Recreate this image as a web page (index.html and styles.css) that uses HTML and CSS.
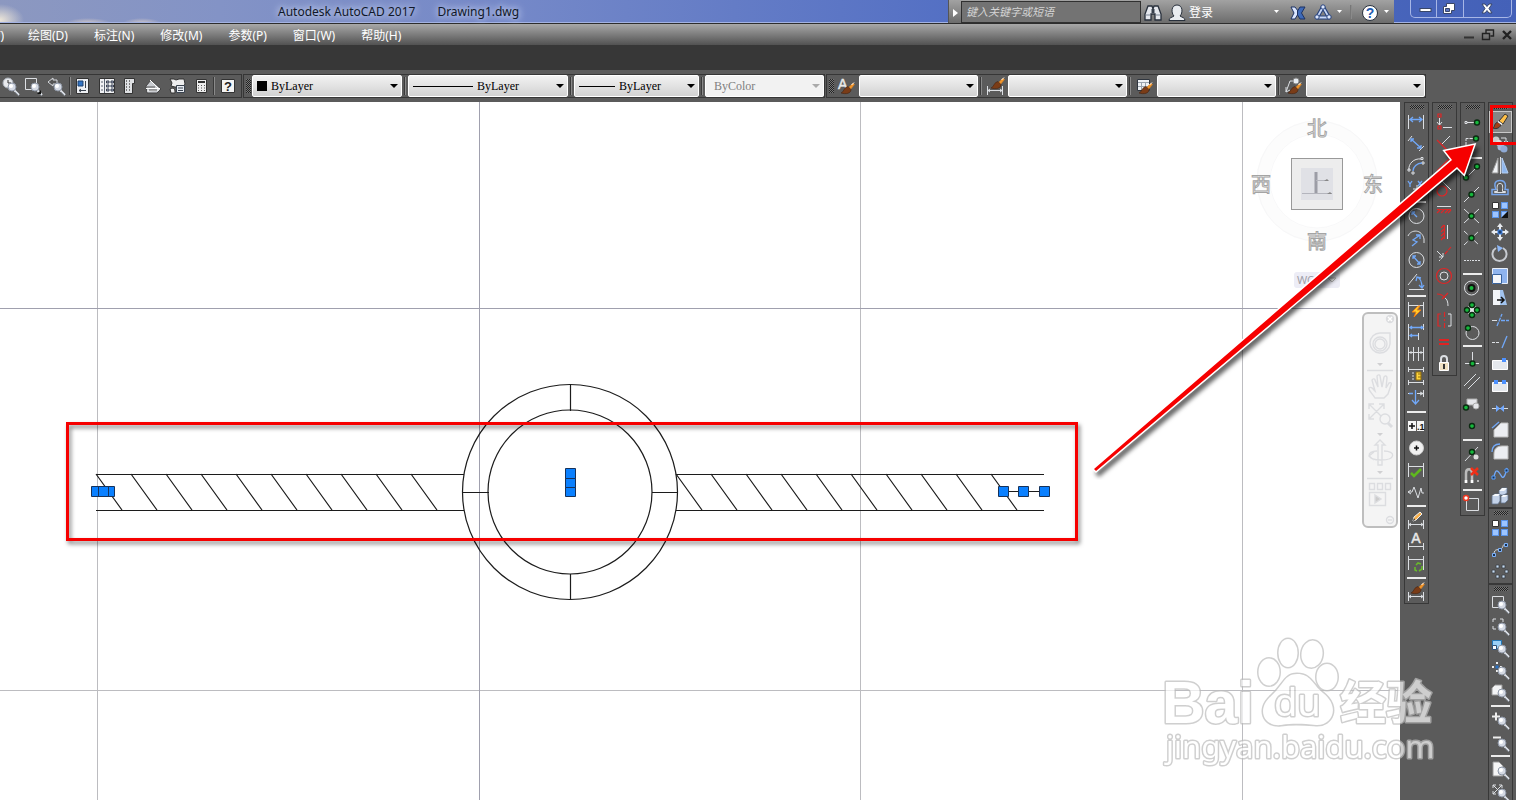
FILE: index.html
```html
<!DOCTYPE html>
<html lang="zh-CN">
<head>
<meta charset="utf-8">
<title>Autodesk AutoCAD 2017</title>
<link rel="stylesheet" href="styles.css">
</head>
<body>
<svg class="defs" width="0" height="0" aria-hidden="true">
  <defs>
    <g id="lens"><path d="M14 14l5 5" stroke="#dfe3ea" stroke-width="2"/><path d="M15 16l4 4" stroke="#8b929c"/><circle cx="12" cy="11" r="4" fill="#d5dae4" stroke="#8d96a5"/><circle cx="11" cy="10" r="2" fill="#fff"/></g>
    <g id="dot"><circle r="2.5" fill="#16b83c" stroke="#0c2a12" stroke-width="1.4"/></g>
    <g id="brush"><path d="M9 7l5-5 1.500 1.500-4 5z" fill="#f0942a" stroke="#c97a22" stroke-width=".5"/><path d="M12.500 4l2.500-2.500" stroke="#fff"/><path d="M9 5.500l3 3c0 4-5 5-10 3.500 3-1 3-6 7-6.500z" fill="#7a3c17" stroke="#45220f" stroke-width=".6"/></g>
    <g id="dimlow"><path d="M3.500 11v9M18.500 11v9M4 15.500h14M6 14l-2 1.500 2 1.500M16 14l2 1.500-2 1.500" class="w"/></g>
    <g id="sq"><rect width="6" height="6" fill="#9cc4ff" stroke="#5a94ea"/></g>
  </defs>
</svg>
<div class="app">
  <header class="titlebar">
    <h1 class="title"><span>Autodesk AutoCAD 2017</span><span>Drawing1.dwg</span></h1>
    <div class="infocenter">
      <button class="expand" aria-label="展开"><svg width="12" height="22"><path d="M4 8l5 4-5 4z" fill="#fff"/></svg></button>
      <input class="search" type="text" aria-label="搜索" placeholder="键入关键字或短语">
      <button aria-label="查找"><svg width="24" height="22"><path d="M7 5h4l1 3 1-3h4l3 8v6h-6v-6h-4v6H4v-6z" fill="#e4e7ed" stroke="#28303c" stroke-width="1.300"/><path d="M10.500 8h3v4h-3z" fill="#38404c"/><path d="M5 14h4M15 14h4" stroke="#7d8796"/></svg></button>
      <button class="signin"><svg width="22" height="22"><path d="M4 19.500c0-3 3-3 5-4.500-3-3-3-11 3-11s6 8 3 11c2 1.500 5 1.500 5 4.500z" fill="#e9ecf0" stroke="#28303c"/></svg><span>登录</span><i class="caret push"></i></button>
      <button aria-label="Exchange"><svg width="18" height="22"><path d="M2 6h4l3 4v3l-3 5H2l3-6z" fill="#dbe6ff" stroke="#1d3264"/><path d="M16 6h-5l-2.500 4v4l2.500 4h5l-3.500-6z" fill="#3e6ab8" stroke="#1d3264"/></svg></button>
      <button class="a360" aria-label="A360"><svg width="20" height="22"><path d="M10 6L4 16.500h12z" fill="none" stroke="#27427c" stroke-width="4" stroke-linejoin="round"/><path d="M10 6L4 16.500h12z" fill="none" stroke="#c8d8f7" stroke-width="1.800"/><g fill="#dce6fb" stroke="#27427c"><circle cx="10" cy="6" r="2.200"/><circle cx="4" cy="16" r="2.200"/><circle cx="16" cy="16" r="2.200"/></g></svg><i class="caret"></i></button>
      <span class="rule faint"></span>
      <button class="help" aria-label="帮助"><svg width="20" height="22"><circle cx="10" cy="12" r="7.500" fill="#fff" stroke="#28303c"/><text x="10" y="17" text-anchor="middle" class="qmark">?</text></svg><i class="caret"></i></button>
    </div>
    <div class="winctl">
      <button aria-label="最小化"><svg width="27" height="17"><rect x="9" y="8.500" width="11" height="3" fill="#fff" stroke="#394668"/></svg></button>
      <button aria-label="还原"><svg width="27" height="17"><path d="M9.500 3.500h8v7h-3v3h-8v-7h3z" fill="#fff" stroke="#394668"/><path d="M8.500 8.500h4v3h-4z" fill="#5d76bf" stroke="#394668"/></svg></button>
      <button class="wide" aria-label="关闭"><svg width="46" height="17"><path d="M18 4h3l2 2.500L25 4h3l-3 4.500 3 4.500h-3l-2-2.500-2 2.500h-3l3-4.500z" fill="#fff" stroke="#394668"/></svg></button>
    </div>
  </header>

  <nav class="menubar">
    <button class="clipped">工具(T)</button>
    <button>绘图(D)</button>
    <button>标注(N)</button>
    <button>修改(M)</button>
    <button>参数(P)</button>
    <button>窗口(W)</button>
    <button>帮助(H)</button>
    <div class="docctl">
      <button aria-label="最小化文档"><svg width="16" height="16"><path d="M3 10.500h10" stroke="#333" stroke-width="2"/></svg></button>
      <button aria-label="还原文档"><svg width="18" height="16"><path d="M7 6V3h7.500v6h-3M3.500 6.500h7v6h-7z" fill="none" stroke="#222" stroke-width="1.400"/></svg></button>
      <button aria-label="关闭文档"><svg width="16" height="16"><path d="M4 4l8 8M12 4l-8 8" stroke="#222" stroke-width="2.400"/></svg></button>
    </div>
  </nav>
  <div class="ribbon"></div>

  <div class="toolbars">
    <div class="bar bar-std">
      <button aria-label="实时缩放"><svg width="21" height="22"><circle cx="8" cy="8" r="5" fill="#e8eaee" stroke="#a9afb8"/><path d="M8 5v3h3" stroke="#333" fill="none"/><use href="#lens" x="0" y="1"/></svg></button>
      <button aria-label="窗口缩放"><svg width="23" height="22"><path d="M3.500 3.500h11v11h-11z" class="w"/><use href="#lens" x="1" y="1"/><path d="M19 15v4h-4z" fill="#111"/></svg></button>
      <button aria-label="缩放上一个"><svg width="23" height="22"><path d="M3 7l5-4v2h4v4H8v2z" fill="#555" stroke="#d8dbe0"/><use href="#lens" x="1" y="1"/></svg></button>
      <span class="rule"></span>
      <button aria-label="特性"><svg width="23" height="22"><path d="M5.500 3.500h12v15h-12z" fill="#eef0f4" stroke="#333"/><path d="M7 6h5v5H7z" fill="#3274c4" stroke="#1c406e"/><path d="M14.500 6v7M8 15.500h7M10 14l-2 1.500 2 1.500" stroke="#39424e" fill="none"/></svg></button>
      <button aria-label="设计中心"><svg width="24" height="22"><path d="M4.500 3.500h15v15h-15z" fill="#f0f1f4" stroke="#333"/><path d="M9.500 4v14M6 7h2M6 11h2M6 15h2" stroke="#5a6370"/><path d="M11.500 6h2.500v2h-2.500zM16 6h2.500v2H16zM11.500 10h2.500v2h-2.500zM16 10h2.500v2H16zM11.500 14h2.500v2h-2.500zM16 14h2.500v2H16z" fill="#aac" stroke="#39424e"/></svg></button>
      <button aria-label="工具选项板"><svg width="22" height="22"><path d="M5.500 3.500h10v5h-2v10h-8z" fill="#dfe1e4" stroke="#333"/><path d="M7 6h1M10 6h1M7 9h1M10 9h1M7 12h1M10 12h1M7 15h1M10 15h1" stroke="#777" stroke-width="2"/></svg></button>
      <button aria-label="图纸集"><svg width="24" height="22"><path d="M4 11l5-6 10 9-4 4H5z" fill="#c9ccd1" stroke="#444"/><path d="M8 5l8 8M4 13.500h14M5 16l12-1" stroke="#fff"/><path d="M5 12l8 0M7 15h8" stroke="#555"/></svg></button>
      <button aria-label="标记集"><svg width="24" height="22"><path d="M4 4h4l2 1 3-1h5l1 5-2 3H9l-4-1 1-3z" fill="#eee" stroke="#333"/><path d="M4 14c4-2 5 0 5 4H5z" fill="#eee" stroke="#333"/><path d="M10.500 10.500h8v7h-8z" fill="#e8ecf2" stroke="#39424e"/><path d="M12 13h5M12 15.500h5" stroke="#39424e"/></svg></button>
      <button aria-label="快速计算器"><svg width="22" height="22"><path d="M5.500 4.500h10v13h-10z" fill="#eee" stroke="#333"/><path d="M7 7h7" stroke="#333" stroke-width="2"/><path d="M7 10.500h7M7 13h7M7 15.500h7" stroke="#555" stroke-dasharray="1 2"/></svg></button>
      <span class="rule"></span>
      <button aria-label="帮助"><svg width="23" height="22"><path d="M5.500 4.500h13v13h-13z" fill="#f4f4f4" stroke="#333"/><text x="12" y="16" text-anchor="middle" class="qbox">?</text></svg></button>
    </div>
    <div class="bar bar-props">
      <span class="grip-v"></span>
      <span class="combo c150"><i class="swatch"></i><select class="pad-swatch" aria-label="颜色"><option>ByLayer</option></select></span>
      <span class="rule"></span>
      <span class="combo c160"><i class="sample s60"></i><select class="pad-line" aria-label="线型"><option>ByLayer</option></select></span>
      <span class="rule"></span>
      <span class="combo c125"><i class="sample s36"></i><select class="pad-weight" aria-label="线宽"><option>ByLayer</option></select></span>
      <span class="rule"></span>
      <span class="combo c120 off"><select aria-label="打印样式" disabled><option>ByColor</option></select></span>
    </div>
    <div class="bar bar-styles">
      <span class="grip-v"></span>
      <button aria-label="文字样式"><svg width="24" height="22"><text x="3" y="14" class="letter thin">A</text><use href="#brush" x="4" y="6"/></svg></button>
      <span class="combo c120"><select aria-label="当前文字样式"></select></span>
      <span class="rule"></span>
      <button aria-label="标注样式"><svg width="24" height="22"><use href="#dimlow"/><use href="#brush" x="5" y="1"/></svg></button>
      <span class="combo c120"><select aria-label="当前标注样式"></select></span>
      <span class="rule"></span>
      <button aria-label="表格样式"><svg width="24" height="22"><path d="M4.500 4.500h12v11h-12z" fill="#eef1f4" stroke="#30363f"/><path d="M5 7.500h11M5 11.500h11M8.500 7v8M12.500 7v8" stroke="#9aa3ad"/><use href="#brush" x="4" y="6"/></svg></button>
      <span class="combo c120"><select aria-label="当前表格样式"></select></span>
      <span class="rule"></span>
      <button aria-label="多重引线样式"><svg width="24" height="22"><path d="M4 17l4-11h4M4 12v5l4-2" class="w"/><circle cx="14" cy="6" r="3" fill="#e8edf2" stroke="#888"/><use href="#brush" x="4" y="6"/></svg></button>
      <span class="combo c120"><select aria-label="当前引线样式"></select></span>
    </div>
  </div>

  <div class="workspace">
    <main class="canvas">
      <svg class="drawing" width="1400" height="698" role="img" aria-label="Drawing1">
        <g class="grid"><path d="M97.500 0v698M860.500 0v698M1242.500 0v698M0 588.500h1400"/><path class="axis" d="M479.500 0v698M0 206.500h1400"/></g>
        <g class="ink">
          <circle cx="570" cy="390" r="107.500"/><circle cx="570" cy="390" r="82"/>
          <path d="M570.500 283v26M570.500 472v26M463 390.500h26M652 390.500h26"/>
          <path d="M96 372.500h368M96 408.500h368M676 372.500h368M676 408.500h368"/>
          <path d="M96 372l26 36M131 372l26 36M166 372l26 36M201 372l26 36M236 372l26 36M271 372l26 36M306 372l26 36M341 372l26 36M376 372l26 36M411 372l26 36"/>
          <path d="M676 372l26 36M711 372l26 36M746 372l26 36M781 372l26 36M816 372l26 36M851 372l26 36M886 372l26 36M921 372l26 36M956 372l26 36M991 372l26 36"/>
          <path d="M1003 389.500h41"/>
        </g>
        <g class="grips"><path d="M91.500 384.500h10v10h-10z"/><path d="M104.500 384.500h10v10h-10z"/><path d="M98.500 384.500h10v10h-10z"/><path d="M565.500 366.500h10v10h-10zM565.500 385.500h10v9h-10zM565.500 376.500h10v9h-10zM998.500 384.500h10v10h-10zM1018.500 384.500h10v10h-10zM1039.500 384.500h10v10h-10z"/></g>
        <rect class="marker" x="67.500" y="321.500" width="1009" height="116"/>
      </svg>

      <svg class="viewcube" width="150" height="190" role="img" aria-label="ViewCube">
        <circle cx="77" cy="79" r="54" fill="none" stroke="#fcfcfc" stroke-width="13"/>
        <circle cx="77" cy="79" r="60" fill="none" stroke="#f7f7f8"/><circle cx="77" cy="79" r="47" fill="none" stroke="#f8f8f9"/>
        <rect x="51.500" y="56.500" width="51" height="51" fill="#ededed" stroke="#999"/>
        <path d="M61 66h32v32H61z" fill="#e0e1e6"/>
        <path d="M76 70v21" stroke="#9c9da6" stroke-width="3"/><path d="M62 91.500h30M76 78.500h12" stroke="#b4b5bd"/><path d="M84 79l3-2 2 2zM87 92l3-2 2 2z" fill="#888"/>
        <g class="compass"><text x="77" y="34">北</text><text x="21" y="90">西</text><text x="133" y="90">东</text><text x="77" y="147">南</text></g>
        <rect x="54" y="170" width="46" height="16" rx="3" fill="#ededf6"/>
        <text x="57" y="182" class="wcs">WCS</text><path d="M88 176h8l-4 4z" fill="#fff" stroke="#bbb"/>
      </svg>

      <div class="navbar">
        <svg width="32" height="212" role="group" aria-label="导航栏">
          <g fill="none" stroke="#dcdde0" stroke-width="1.400">
            <circle cx="26" cy="5" r="3.500" fill="#ddd"/><path d="M24 3l4 4M28 3l-4 4" stroke="#fff"/>
            <path d="M16 19h10v11a10 10 0 1 1-10-11z"/><circle cx="16" cy="30" r="7"/><circle cx="16" cy="30" r="5"/>
            <path d="M3 56.500h26M3 164.500h26"/>
            <path d="M11 84C8 79 4 76 5 74c2-2 4 1 6 3L8 66c1-2 3-1 3 0l3 7-1-11c1-2 3-1 3 0l2 11 2-10c1-2 3-1 3 1l-1 10 3-5c2-1 3 0 2 2l-3 9-4 4z"/>
            <path d="M5 90l15 15M20 90L5 105M5 95v-5h5M15 90h5v5M5 100v5h5"/><circle cx="21" cy="105" r="5" fill="#f4f4f4"/><path d="M24 109l4 4" stroke-width="3"/>
            <path d="M14 151v-20h-3l5-5 5 5h-3v20zM13 137c-11 0-11 9 4 9 15 0 15-9 3-9M10 138l-5 4 5 4"/>
            <path d="M5.500 169.500h5v6h-5zM13.500 169.500h5v6h-5zM21.500 169.500h5v6h-5zM5.500 178.500h16v13h-16z"/><path d="M11 181l6 4-6 4z" fill="#ccc"/>
            <circle cx="26" cy="206" r="3.500"/><path d="M24 206h4"/>
          </g>
          <path d="M13 49h6l-3 3zM13 119h6l-3 3zM13 157h6l-3 3z" fill="#d0d0d2"/>
        </svg>
      </div>
    </main>

    <aside class="docks">
      <div class="dock">
        <div class="palette">
          <button aria-label="线性"><svg><path class="w" d="M3.500 4v14M18.500 4v14"/><path class="b" d="M5 8.500h12M8 6L5 8.500 8 11M14 6l3 2.500-3 2.500"/></svg></button>
          <button aria-label="对齐"><svg><path class="w" d="M7 3L3 8M19 13l-5 5"/><path class="b" d="M6 6l10 9M6 9V6h3M12 15h4v-3"/></svg></button>
          <button aria-label="弧长"><svg><path class="w" d="M4 15C3 9 9 3 16 4M3 14h2v2H3zM16 2.500h2v2h-2zM7 17h2v2H7zM17 7h2v2h-2z"/><path class="b" d="M8 16c0-4 4-8 9-8"/></svg></button>
          <button aria-label="坐标"><svg><path class="b" d="M3 4l2 3 2-3M5 7v3M13 4l4 5M17 4l-4 5"/><path class="w" d="M8 12h8M12 8v9"/></svg></button>
          <hr>
          <button aria-label="半径"><svg><circle class="w" cx="11.500" cy="11" r="7.500"/><path class="b" d="M12 12L7 7M7 10V7h3"/></svg></button>
          <button aria-label="折弯"><svg><path class="w" d="M3 9c3-7 14-7 16 3v4"/><path class="b" d="M7 19l5-4-4-2 7-5M11 8h4v4"/></svg></button>
          <button aria-label="直径"><svg><circle class="w" cx="11.500" cy="11" r="7.500"/><path class="b" d="M8 7l7 8M8 10V7h3M12 15h3v-3"/></svg></button>
          <button aria-label="角度"><svg><path class="w" d="M19 18.500H4M3 14L12 3"/><path class="b" d="M12 6c3 1 5 5 5 11M11 10l1-4 4 1M14 14l3 3 2-3"/></svg></button>
          <hr>
          <button aria-label="快速标注"><svg><path class="w" d="M3.500 3v15M18.500 3v15M4 6.500h14"/><path d="M13 7l-6 6h4l-2 5 7-7h-4l3-4z" fill="#ffd02c" stroke="#f07d12"/></svg></button>
          <button aria-label="基线"><svg><path class="w" d="M3.500 3v16M18.500 3v6M13.500 12v7"/><path class="b" d="M5 6.500h13M5 14.500h8M7 5L5 6.500 7 8M16 5l2 1.500L16 8M7 13l-2 1.500L7 16"/></svg></button>
          <button aria-label="连续"><svg><path class="w" d="M3.500 4v14M8.500 4v14M13.500 4v14M18.500 4v14M4 9.500h14M6 8v3M16 8v3"/></svg></button>
          <button aria-label="等距标注"><svg><path class="w" d="M3.500 2v5M18.500 2v5M3.500 15v5M18.500 15v5M4 4.500h14M4 17.500h14"/><path d="M11 7h5v8h-5z" fill="#ffd43c" stroke="#8d6b0e"/><path d="M13 9h3M13 12h3" stroke="#8d6b0e"/><path class="w" d="M8 7v8" stroke-dasharray="2 1"/></svg></button>
          <button aria-label="折断标注"><svg><path class="w" d="M3 6.500h5M12 6.500h6M18.500 3v7M15 5l3 1.500L15 8"/><path class="b" d="M10.500 3v13M4 6.500h4M7 13l3.500 4 3.500-4"/></svg></button>
          <hr>
          <button aria-label="公差"><svg><path d="M3 6h8v10H3zM12 6h7v10h-7z" fill="#f5f5f5"/><path d="M4 11h6M7 8v6" stroke="#111" stroke-width="1.500"/><text x="12" y="15" class="tiny">.1</text></svg></button>
          <button aria-label="圆心标记"><svg><circle cx="11.500" cy="11" r="7" fill="#f1f1f1" stroke="#ccc"/><path d="M9 11h5M11.500 8.500v5" stroke="#111" stroke-width="1.500"/></svg></button>
          <button aria-label="检验"><svg><path class="w" d="M3.500 4v14M18.500 4v14M4 7.500h14"/><path d="M6 14l3 3 7-7" fill="none" stroke="#5fb81e" stroke-width="2.500"/></svg></button>
          <button aria-label="折弯线性"><svg><path class="w" d="M3 11h4l2-5 4 11 3-10 1 5h2M6 9l-3 2 3 2"/></svg></button>
          <hr>
          <button aria-label="编辑标注"><svg><use href="#dimlow"/><path d="M8 12l1-4 6-5 2 2-6 6z" fill="#f8b04b" stroke="#eee"/><path d="M8 12l2-1-1-2z" fill="#222"/></svg></button>
          <button aria-label="编辑标注文字"><svg><path class="w" d="M3.500 12v7M18.500 12v7M4 15.500h14"/><text x="11" y="12" text-anchor="middle" class="letter thin">A</text></svg></button>
          <button aria-label="标注更新"><svg><path class="w" d="M3.500 3v14M18.500 3v14M4 6.500h14"/><path d="M11 12l2-2 3 1M17 13v3l-3 2M10 14v3l2 1" fill="none" stroke="#68b82b" stroke-width="1.600"/></svg></button>
          <hr>
          <button aria-label="标注样式"><svg><use href="#dimlow"/><use href="#brush" x="4" y="0"/></svg></button>
        </div>
      </div>
      <div class="dock">
        <div class="palette">
          <button aria-label="重合"><svg><path class="r" d="M5 3h3v3H5zM5 15h3v3H5z"/><path class="w" d="M6.500 7v7M4 11l2.500 3L9 11M10 16.500h9"/></svg></button>
          <button aria-label="垂直"><svg><path class="r" d="M4 7l10 10"/><path class="w" d="M9 11l8-8"/></svg></button>
          <button aria-label="平行"><svg><path class="r" d="M4 16L16 4"/><path class="w" d="M8 19L19 8"/></svg></button>
          <button aria-label="相切"><svg><circle class="r" cx="9" cy="14" r="5"/><path class="w" d="M8 3l10 10"/></svg></button>
          <button aria-label="水平"><svg><path class="w" d="M4 7.500h14"/><path class="r" d="M4 10.500h14M7 11l-3 3M11 11l-3 3M15 11l-3 3M18 11l-3 3"/></svg></button>
          <button aria-label="竖直"><svg><path class="w" d="M14.500 4v14"/><path class="r" d="M11.500 4v14M11 4L8 7M11 8l-3 3M11 12l-3 3M11 16l-3 3"/></svg></button>
          <button aria-label="共线"><svg><path class="w" d="M4 8l6 6M6 14h4v-4"/><path class="r" d="M12 11l6-7" stroke-dasharray="4 1"/><path class="w" d="M6 18l4-4" stroke-dasharray="2 1"/></svg></button>
          <button aria-label="同心"><svg><circle class="r" cx="11" cy="11" r="7.500"/><circle class="w" cx="11" cy="11" r="4"/></svg></button>
          <button aria-label="平滑"><svg><path class="r" d="M4 7c4 0 6 1 8 4M9 12l6-6"/><path class="w" d="M12 11c2 1 3 4 3 8"/></svg></button>
          <button aria-label="对称"><svg><path class="r" d="M8 5H5v12h3M11.500 3v5M11.500 10v2M11.500 14v5"/><path class="w" d="M15 5h3v12h-3"/></svg></button>
          <button aria-label="相等"><svg><path d="M6 9h10M6 13h10" stroke="#e02222" stroke-width="2"/></svg></button>
          <button aria-label="固定"><svg><path class="w" d="M8 9V6c0-4 6-4 6 0v3" stroke-width="2"/><path d="M6.500 9.500h9v8h-9z" fill="#efe0c2" stroke="#fff"/><path d="M11 11v5" stroke="#333" stroke-width="2"/></svg></button>
        </div>
      </div>
      <div class="dock">
        <div class="palette">
          <button aria-label="临时追踪点"><svg><path class="w" d="M6 11.500h9M4 10.500h2v2H4z"/><use href="#dot" x="16" y="11.500"/></svg></button>
          <button aria-label="捕捉自"><svg><path class="w" d="M5 14V5.500h9M4 14h2v2H4z" stroke-dasharray="5 1"/><use href="#dot" x="15" y="5.500"/></svg></button>
          <hr>
          <button aria-label="端点"><svg><path class="w" d="M6 16L16 6"/><use href="#dot" x="5" y="16.500"/><use href="#dot" x="16" y="5.500"/></svg></button>
          <button aria-label="中点"><svg><path class="w" d="M3 19L18 4"/><use href="#dot" x="10.500" y="11.500"/></svg></button>
          <button aria-label="交点"><svg><path class="w" d="M3 4l15 14M3 18L18 4"/><use href="#dot" x="10.500" y="11"/></svg></button>
          <button aria-label="外观交点"><svg><path class="w" d="M3 4l15 14M3 18L18 4" stroke-dasharray="5 2"/><use href="#dot" x="10.500" y="11"/></svg></button>
          <button aria-label="延长线"><svg><path class="w" d="M3 11.500h7M11 11.500h8" stroke-dasharray="2 1"/></svg></button>
          <hr>
          <button aria-label="圆心"><svg><circle class="w" cx="10.500" cy="11" r="7"/><circle cx="10.500" cy="11" r="3" fill="#16b83c" stroke="#111" stroke-width="2"/></svg></button>
          <button aria-label="象限点"><svg><circle cx="11" cy="11" r="5" fill="#e7e8eb" stroke="#aaa"/><use href="#dot" x="11" y="6"/><use href="#dot" x="6" y="11"/><use href="#dot" x="16" y="11"/><use href="#dot" x="11" y="16"/></svg></button>
          <button aria-label="切点"><svg><circle class="w" cx="11.500" cy="12" r="6.500"/><use href="#dot" x="7" y="7"/></svg></button>
          <hr>
          <button aria-label="垂足"><svg><path class="w" d="M11.500 3v10M4 14.500h14"/><use href="#dot" x="11.500" y="14.500"/></svg></button>
          <button aria-label="平行线"><svg><path class="w" d="M3 15L15 3M7 18L19 6"/></svg></button>
          <button aria-label="插入点"><svg><path d="M6 6h10v6H6z" fill="#e5e6ea" stroke="#aaa"/><circle cx="15" cy="13" r="3" fill="#e5e6ea" stroke="#aaa"/><use href="#dot" x="5" y="14.500"/></svg></button>
          <button aria-label="节点"><svg><use href="#dot" x="11" y="11"/></svg></button>
          <hr>
          <button aria-label="最近点"><svg><path class="w" d="M4 18L17 4M11 9l4 5"/><use href="#dot" x="11" y="9"/><circle cx="15" cy="14" r="2.500" fill="#ddd"/></svg></button>
          <button aria-label="无捕捉"><svg><path d="M5 18V8c0-5 6-5 6 0v10" fill="none" stroke="#bbb" stroke-width="2.500"/><path d="M5 15v3M11 15v3" stroke="#fff" stroke-width="2.500"/><path d="M10 3l7 7M17 3l-7 7" stroke="#f03018" stroke-width="2.500"/><path d="M16 15h2v2h-2z" fill="#bbb"/></svg></button>
          <hr>
          <button aria-label="捕捉设置"><svg><path class="w" d="M5.500 5.500h12v12h-12z"/><circle cx="5" cy="5" r="2.500" fill="#fff" stroke="#ef3720" stroke-width="1.500"/></svg></button>
        </div>
      </div>
      <div class="dock">
        <div class="palette">
          <button class="active" aria-label="删除"><svg><path d="M10 10l6-7 3 2-5 8z" fill="#ffc048" stroke="#333"/><path d="M9 11l3 3c-2 4-6 4-8 3 2-1 1-5 5-6z" fill="#a04018" stroke="#333"/><path d="M9 10.500l4 3" stroke="#fff" stroke-width="1.500"/></svg></button>
          <button aria-label="复制"><svg><circle cx="7" cy="7" r="3.500" fill="#ccc"/><circle cx="10" cy="10" r="3" fill="#ddd"/><circle cx="12" cy="14" r="3.500" fill="#a6b8da"/><circle cx="15" cy="16" r="3.500" fill="#8fa9d4"/><path class="w" d="M12 5h5v5M15 8l2 2 2-2"/></svg></button>
          <button aria-label="镜像"><svg><path d="M9 3v15H3z" fill="#f1f3f6" stroke="#999"/><path d="M13 3v15h6z" fill="#8eb7ee" stroke="#b5cef2"/><path class="w" d="M11.500 2v17"/></svg></button>
          <button aria-label="偏移"><svg><path d="M3 17.500h16v-5h-3c1-4 1-9-5-9s-6 5-4 9H3z" fill="none" stroke="#75a5ed" stroke-width="1.500"/><path d="M5.500 15.500h11v-1h-3c0-4 1-8-2.500-8s-3 4-2.500 8h-3z" class="w"/></svg></button>
          <button aria-label="阵列"><svg><path d="M3.500 3.500h6v6h-6z" fill="#fff" stroke="#333"/><use href="#sq" x="12.500" y="3.500"/><use href="#sq" x="3.500" y="12.500"/><use href="#sq" x="12.500" y="12.500"/><path d="M19 12v7h-7z" fill="#111"/></svg></button>
          <button aria-label="移动"><svg><path d="M11 2l3 4h-2v3h-2V6H8zM11 20l3-4h-2v-3h-2v3H8zM2 11l4-3v2h3v2H6v2zM20 11l-4-3v2h-3v2h3v2z" fill="#e8ebef"/><path d="M9 9h4v4H9z" fill="#20416f" stroke="#4489ee"/></svg></button>
          <button aria-label="旋转"><svg><path d="M14 5a7 7 0 1 1-7 0" fill="none" stroke="#c7cbd1" stroke-width="2"/><path d="M8 2l6 3-5 4z" fill="#8eb8f7"/></svg></button>
          <button aria-label="缩放"><svg><path d="M3.500 3.500h15v15h-15z" fill="#8fb4ee" stroke="#e8eef8"/><path d="M3.500 9.500h9v9h-9z" fill="#f4f6fa" stroke="#39639d"/></svg></button>
          <button aria-label="拉伸"><svg><path d="M4 3h7v15H4z" fill="#f3f5f8"/><path d="M11 3h3l4 15h-7z" fill="#a1c3ee"/><path d="M8 13h7M12 10l3 3-3 3" stroke="#111" fill="none" stroke-width="1.500"/></svg></button>
          <button aria-label="修剪"><svg><path class="w" d="M3 11.500h5"/><path class="b" d="M8 17l5-12M12 11.500h8" stroke-dasharray="4 1"/></svg></button>
          <button aria-label="延伸"><svg><path class="w" d="M3 11.500h8" stroke-dasharray="3 1"/><path class="b" d="M13 17l5-12"/></svg></button>
          <button aria-label="打断于点"><svg><path d="M3.500 7.500h15v9h-15z" fill="#e5e8ed" stroke="#fff"/><path d="M13 5h4v4h-4z" fill="#4d91ff"/></svg></button>
          <button aria-label="打断"><svg><path d="M3.500 7.500h15v9h-15z" fill="#e5e8ed" stroke="#fff"/><path d="M5 5h4v4H5zM13 5h4v4h-4z" fill="#4d91ff"/></svg></button>
          <button aria-label="合并"><svg><path class="w" d="M3 11.500h16"/><path d="M7 8l4 3.500L7 15zM15 8l-4 3.500 4 3.500z" fill="#72a9ff"/></svg></button>
          <button aria-label="倒角"><svg><path d="M5 18h14V4h-7l-7 7z" fill="#eceef2" stroke="#bbb"/><path class="b" d="M3 9l7-6"/></svg></button>
          <button aria-label="圆角"><svg><path d="M5 18h14V5h-6c-5 0-8 3-8 8z" fill="#eceef2" stroke="#bbb"/><path class="b" d="M3 11c0-5 3-8 8-8"/></svg></button>
          <button aria-label="光顺曲线"><svg><path class="b" d="M5 14c2-12 6-3 8 0 2 2 4-4 5-9"/><path d="M3 13h3v3H3zM16 6h3v3h-3z" fill="#173252" stroke="#5ba0ff"/></svg></button>
          <button aria-label="分解"><svg><path d="M3 11l3-2h5v7l-2 3H3zM10 6l3-3h5v5l-3 2h-5zM12 12l2-2h5v5l-3 3h-4z" fill="#c4d3e9" stroke="#62748e" stroke-width=".8"/><path d="M3 11l3-2h5l-2 2zM10 6l3-3h5l-3 3zM12 12l2-2h5l-3 2z" fill="#f6f9fd"/></svg></button>
        </div>
        <div class="palette">
          <button aria-label="编辑阵列"><svg><path d="M3.500 3.500h6v6h-6z" fill="#fff" stroke="#333"/><use href="#sq" x="12.500" y="3.500"/><use href="#sq" x="3.500" y="12.500"/><use href="#sq" x="12.500" y="12.500"/></svg></button>
          <button aria-label="编辑样条曲线"><svg><path class="w" d="M5 16c0-8 5-4 7-6 3-2 1-5 5-5"/><path d="M3.500 14.500h3v3h-3zM9.500 9.500h3v3h-3zM15.500 4.500h3v3h-3z" fill="#173252" stroke="#7cb0f8"/></svg></button>
          <button aria-label="编辑多段线"><svg><path d="M7 4h3v3H7zM13 4h3v3h-3zM3 9h3v3H3zM16 9h3v3h-3zM7 14h3v3H7zM13 14h3v3h-3z" fill="#c6dcf2" stroke="#3a3f46" stroke-width=".8"/></svg></button>
        </div>
        <div class="palette last">
          <button aria-label="窗口缩放"><svg><path class="w" d="M3.500 3.500h11v11h-11z"/><use href="#lens" x="1" y="1"/></svg></button>
          <button aria-label="动态缩放"><svg><path class="w" d="M4 7V4h3M11 4h3v3M4 11v3h3"/><use href="#lens" x="1" y="1"/></svg></button>
          <button aria-label="比例缩放"><svg><path d="M3.500 3.500h9v8h-9z" fill="#9bd0f6" stroke="#2378b8"/><path d="M3.500 8.500h4v4h-4z" fill="#fff" stroke="#2d527a"/><use href="#lens" x="1" y="1"/></svg></button>
          <button aria-label="中心缩放"><svg><path d="M8 3v2M8 11v2M3 8h2M11 8h2" stroke="#eee" stroke-width="2"/><path d="M6.500 6.500h3v3h-3z" fill="#2b72c4"/><use href="#lens" x="1" y="1"/></svg></button>
          <button aria-label="缩放对象"><svg><path d="M3 7l3-3h7v7l-3 3H3z" fill="#f3f4f6" stroke="#999"/><use href="#lens" x="1" y="1"/></svg></button>
          <hr>
          <button aria-label="放大"><svg><path d="M3 7.500h8M7 3.500v8" stroke="#eee" stroke-width="2"/><use href="#lens" x="1" y="1"/></svg></button>
          <button aria-label="缩小"><svg><path d="M4 6.500h8" stroke="#eee" stroke-width="2"/><use href="#lens" x="1" y="1"/></svg></button>
          <hr>
          <button aria-label="全部缩放"><svg><path d="M4 3h6l4 4v10H4z" fill="#f5f5f6" stroke="#999"/><use href="#lens" x="1" y="1"/></svg></button>
          <button aria-label="范围缩放"><svg><path class="w" d="M4 4l9 9M13 4l-9 9M4 7V4h3M10 4h3v3M4 10v3h3"/><use href="#lens" x="1" y="1"/></svg></button>
        </div>
      </div>
    </aside>

    <svg class="watermark" width="290" height="140" role="img" aria-label="Baidu">
      <g class="ghost">
        <text x="10" y="87" class="brand">Bai</text>
        <ellipse cx="117" cy="36" rx="10.500" ry="13.500"/><ellipse cx="136" cy="17" rx="9.500" ry="14"/><ellipse cx="160" cy="18" rx="10.500" ry="13.500" transform="rotate(8 160 18)"/><ellipse cx="175" cy="41" rx="10.500" ry="13"/>
        <path d="M145 38c14 0 15 10 26 19 18 14 9 33-7 32-12-1-21-2-35 0-18 2-24-16-11-28 14-12 14-23 27-23z"/>
        <text x="122" y="80" class="du">du</text>
        <text x="188" y="83" class="jingyan">经验</text>
        <text x="14" y="122" class="site">jingyan.baidu.com</text>
      </g>
    </svg>
  </div>

  <svg class="callout" width="430" height="480" aria-hidden="true">
    <path d="M8 469L366 160L359 151L388 145L378 174L371 167L10 471Z"/>
    <rect x="405.500" y="106.500" width="40" height="37"/>
  </svg>
</div>
</body>
</html>
```
FILE: styles.css
```css
* { box-sizing: border-box; }
body {
  margin: 0;
  font-family: "Noto Sans", "Noto Sans CJK SC", sans-serif;
  font-size: 12px;
  color: #fff;
  background: #5b5b5b;
}
button {
  display: flex;
  align-items: center;
  padding: 0;
  border: 0;
  background: none;
  color: inherit;
  font: inherit;
}
svg { display: block; flex: none; }
.defs { position: absolute; }
.app {
  position: relative;
  display: flex;
  flex-direction: column;
  height: 100vh;
  overflow: hidden;
}

/* Title bar */
.titlebar {
  display: flex;
  flex: none;
  height: 24px;
  border-bottom: 1px solid #2d2d2d;
  box-shadow: inset 0 -1px #a3b2e2;
  background:
    radial-gradient(ellipse 24px 16px at 0 20px, #ece5d8, transparent),
    radial-gradient(ellipse 24px 6px at 88px 24px, #dccfc8, transparent),
    radial-gradient(ellipse 20px 6px at 142px 24px, #dccfc8, transparent),
    linear-gradient(90deg, #8c98c0, #8393c6 220px, #7488c8 520px, #5470c4 948px, #4461b8);
}
.title {
  display: flex;
  flex: 1;
  gap: 22px;
  margin: 0;
  padding-left: 278px;
  color: #101828;
  font-size: 12px;
  font-weight: 400;
  line-height: 23px;
  white-space: nowrap;
  text-shadow: 0 0 6px #cfd8f4, 0 0 8px #cfd8f4;
}
.infocenter {
  display: flex;
  flex: none;
  align-items: center;
  width: 446px;
  height: 23px;
  background: linear-gradient(#a2a2a2, #6c6c6c);
}
.expand { height: 23px; border-left: 1px solid #555; }
.search {
  width: 180px;
  height: 22px;
  padding: 0 4px;
  border: 1px solid #303030;
  background: #737373;
  color: #ddd;
  font: italic 12px "Noto Sans", "Noto Sans CJK SC", sans-serif;
}
.search::placeholder { color: #d4d4d4; opacity: 1; font-size: 11px; }
.signin { width: 124px; }
.signin span { margin-left: 2px; }
.caret {
  width: 5px;
  height: 3px;
  background: #fff;
  clip-path: polygon(0 0, 100% 0, 50% 100%);
}
.push { margin-left: auto; margin-right: 10px; }
.a360, .help { gap: 4px; margin-left: 6px; }
.winctl {
  display: flex;
  flex: none;
  width: 122px;
  height: 18px;
  padding-left: 16px;
}
.winctl button {
  width: 27px;
  height: 18px;
  border: 1px solid #a7b6e6;
  border-top: 0;
  border-left: 0;
}
.winctl button:first-child { border-left: 1px solid #a7b6e6; border-radius: 0 0 0 5px; }
.winctl .wide { width: 48px; border-radius: 0 0 5px 0; }

/* Menu bar */
.menubar {
  display: flex;
  flex: none;
  gap: 26px;
  height: 21px;
  background: linear-gradient(#a8a8a8, #525252);
  white-space: nowrap;
}
.menubar .clipped {
  justify-content: flex-end;
  width: 4px;
  margin-right: -2px;
  overflow: hidden;
}
.docctl {
  display: flex;
  gap: 2px;
  margin-left: auto;
  padding-right: 1px;
}
.ribbon { flex: none; height: 25px; background: #373737; }

/* Toolbars */
.toolbars {
  display: flex;
  flex: none;
  gap: 1px;
  height: 32px;
  padding: 4px 0;
}
.bar {
  display: flex;
  align-items: center;
  height: 24px;
  border: 1px solid #363636;
}
.bar-std { border-left: 0; width: 242px; justify-content: space-between; padding-right: 2px; }
.bar-props, .bar-styles { padding-left: 2px; }
.rule {
  flex: none;
  width: 2px;
  height: 18px;
  margin: 0 2px;
  border-left: 1px solid #3a3a3a;
  border-right: 1px solid #8a8a8a;
}
.infocenter .faint { height: 14px; margin-left: 8px; border-left-color: #777; }
.bar-std .rule { margin: 0; }
.grip-v {
  width: 5px;
  height: 14px;
  margin-right: 1px;
  background: repeating-conic-gradient(#222 0 25%, #777 0 50%) 0 0 / 2px 2px;
}
.combo {
  position: relative;
  flex: none;
  height: 22px;
}
.combo::after {
  content: "";
  position: absolute;
  top: 9px;
  right: 4px;
  width: 8px;
  height: 4px;
  background: #000;
  clip-path: polygon(0 0, 100% 0, 50% 100%);
}
.combo select {
  appearance: none;
  width: 100%;
  height: 22px;
  padding: 0 16px 0 8px;
  border: 1px solid #fff;
  border-radius: 2px;
  background: linear-gradient(#f2f2f2, #d2d2d2);
  color: #000;
  font: 12px "Liberation Serif", serif;
}
.c150 { width: 150px; }
.c160 { width: 160px; }
.c125 { width: 125px; }
.c120 { width: 119px; }
.combo .pad-swatch { padding-left: 18px; }
.combo .pad-line { padding-left: 68px; }
.combo .pad-weight { padding-left: 44px; }
.combo.off select { background: #f2f2f2; color: #808080; opacity: 1; }
.combo.off::after { background: #aaa; }
.swatch, .sample { position: absolute; left: 5px; background: #000; }
.swatch { top: 6px; width: 10px; height: 10px; }
.sample { top: 11px; height: 1px; }
.s60 { width: 60px; }
.s36 { width: 36px; }

/* Workspace */
.workspace {
  position: relative;
  display: flex;
  flex: 1;
  min-height: 0;
}
.canvas {
  position: relative;
  flex: 1;
  min-width: 0;
  overflow: hidden;
  background: #fff;
}
.grid path { stroke: #bcbcc0; }
.grid .axis { stroke: #a0a0ae; }
.ink { fill: none; stroke: #1c1c1c; stroke-width: 1.2; }
.grips { fill: #0a80ff; stroke: #16325a; }
.marker {
  fill: none;
  stroke: #f60000;
  stroke-width: 3;
  filter: drop-shadow(2px 3px 2px rgba(0, 0, 0, .5));
}
.viewcube { position: absolute; top: 0; right: 10px; }
.compass {
  fill: #fff;
  stroke: #a4a4a4;
  stroke-width: 1;
  font: 20px "Noto Sans CJK SC", sans-serif;
  text-anchor: middle;
}
.wcs { fill: #a0a0a8; font-size: 11px; }
.navbar {
  position: absolute;
  top: 210px;
  right: 2px;
  border: 2px solid #bebebe;
  border-radius: 6px;
  background: #f4f4f4;
}

/* Docked palettes */
.docks {
  display: flex;
  flex: none;
  gap: 3px;
  width: 116px;
  padding-left: 4px;
  background: #5b5b5b;
}
.dock { width: 25px; flex: none; }
.palette { border: 1px solid #383838; }
.palette::before {
  content: "";
  display: block;
  width: 14px;
  height: 4px;
  margin: 2px auto;
  background: repeating-conic-gradient(#222 0 25%, #777 0 50%) 0 0 / 2px 2px;
}
.palette button { width: 23px; height: 22px; }
.palette svg { width: 23px; height: 22px; }
.palette hr {
  width: 19px;
  height: 2px;
  margin: 2px auto;
  border: 0;
  background: #ececec;
}
.palette .active { background: #858585; box-shadow: inset 0 0 0 1px #c8c8c8; }
.w { fill: none; stroke: #dcdfe3; }
.b { fill: none; stroke: #71a8f8; stroke-width: 1.3; }
.r { fill: none; stroke: #df2626; stroke-width: 1.2; }
.letter { fill: #e8e8e8; font: bold 14px "Liberation Sans", sans-serif; }
.letter.thin { font-weight: 400; stroke: #e8e8e8; stroke-width: .5; }
.tiny { fill: #111; font: bold 9px "Liberation Sans", sans-serif; }
.qmark { fill: #245ab0; font: bold 14px "Liberation Sans", sans-serif; }
.qbox { fill: #222; font: bold 13px "Liberation Sans", sans-serif; }

/* Overlays */
.watermark { position: absolute; right: 74px; bottom: 24px; }
.ghost {
  fill: #fff;
  stroke: #bcbcbc;
  stroke-width: 3;
  paint-order: stroke;
  stroke-linejoin: round;
  opacity: .7;
}
.brand { font: bold 59px "Liberation Sans", sans-serif; }
.du { font: 38px "Noto Sans", sans-serif; }
.jingyan { font: bold 46px "Noto Sans CJK SC", sans-serif; }
.site { font: 31px "Noto Sans", sans-serif; }
.callout {
  position: absolute;
  top: 0;
  right: 0;
  pointer-events: none;
}
.callout path {
  fill: #f60000;
  stroke: #fff;
  stroke-width: 3;
  paint-order: stroke;
  filter: drop-shadow(3px 4px 2px rgba(0, 0, 0, .6));
}
.callout rect { fill: none; stroke: #f60000; stroke-width: 3; }
```
